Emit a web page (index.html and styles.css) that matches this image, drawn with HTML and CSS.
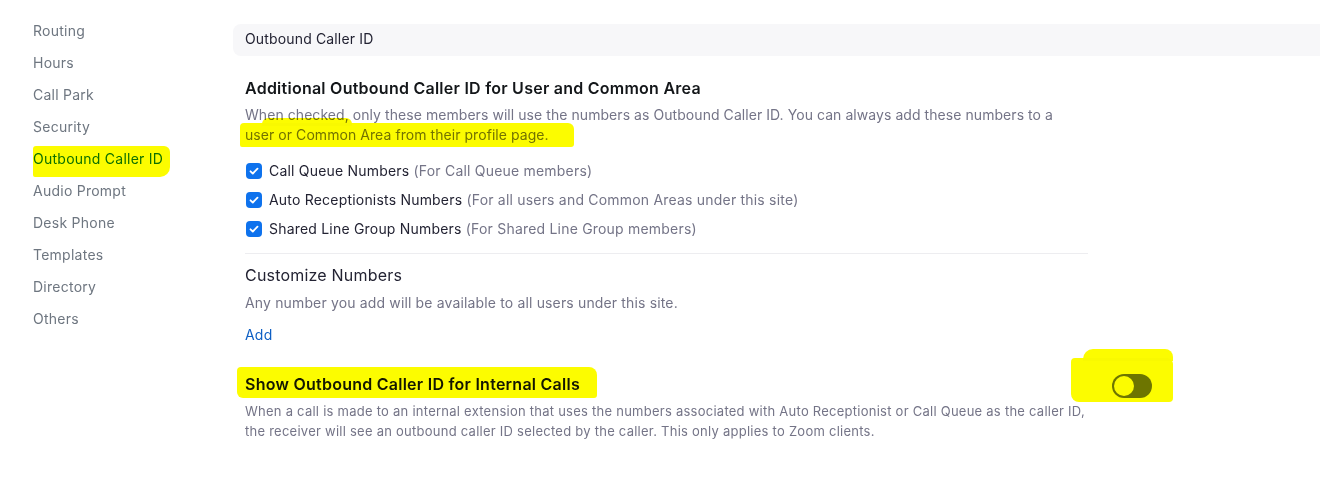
FILE: index.html
```html
<!DOCTYPE html>
<html>
<head>
<meta charset="utf-8">
<link rel="stylesheet" href="styles.css">
</head>
<body>
<div class="page">
  <nav class="sidebar">
    <div class="nav-item">Routing</div>
    <div class="nav-item">Hours</div>
    <div class="nav-item">Call Park</div>
    <div class="nav-item">Security</div>
    <div class="nav-item active">Outbound Caller ID</div>
    <div class="nav-item">Audio Prompt</div>
    <div class="nav-item">Desk Phone</div>
    <div class="nav-item">Templates</div>
    <div class="nav-item">Directory</div>
    <div class="nav-item">Others</div>
  </nav>
  <main class="main">
    <div class="section-bar">Outbound Caller ID</div>
    <div class="content">
      <h2 class="title">Additional Outbound Caller ID for User and Common Area</h2>
      <p class="desc">When checked, only these members will use the numbers as Outbound Caller ID. You can always add these numbers to a user or Common Area from their profile page.</p>
      <div class="checks">
        <label class="check"><span class="box"><svg viewBox="0 0 16 16" width="16" height="16"><path d="M4.5 8.3l2.3 2.2 4.7-4.8" fill="none" stroke="#fff" stroke-width="1.8" stroke-linecap="round" stroke-linejoin="round"/></svg></span><span>Call Queue Numbers <span class="hint">(For Call Queue members)</span></span></label>
        <label class="check"><span class="box"><svg viewBox="0 0 16 16" width="16" height="16"><path d="M4.5 8.3l2.3 2.2 4.7-4.8" fill="none" stroke="#fff" stroke-width="1.8" stroke-linecap="round" stroke-linejoin="round"/></svg></span><span>Auto Receptionists Numbers <span class="hint">(For all users and Common Areas under this site)</span></span></label>
        <label class="check"><span class="box"><svg viewBox="0 0 16 16" width="16" height="16"><path d="M4.5 8.3l2.3 2.2 4.7-4.8" fill="none" stroke="#fff" stroke-width="1.8" stroke-linecap="round" stroke-linejoin="round"/></svg></span><span>Shared Line Group Numbers <span class="hint">(For Shared Line Group members)</span></span></label>
      </div>
      <div class="divider"></div>
      <h3 class="subtitle">Customize Numbers</h3>
      <p class="desc sub-desc">Any number you add will be available to all users under this site.</p>
      <a class="link">Add</a>
      <div class="toggle-row">
        <h2 class="title">Show Outbound Caller ID for Internal Calls</h2>
        <span class="toggle"><span class="knob"></span></span>
      </div>
      <p class="desc note">When a call is made to an internal extension that uses the numbers associated with Auto Receptionist or Call Queue as the caller ID, the receiver will see an outbound caller ID selected by the caller. This only applies to Zoom clients.</p>
    </div>
  </main>
  <div class="mark mark-nav"></div>
  <div class="mark mark-desc"></div>
  <div class="mark mark-desc-bump"></div>
  <div class="mark mark-title"></div>
  <div class="mark mark-toggle"></div>
  <div class="mark mark-toggle-top"></div>
</div>
</body>
</html>
```

FILE: styles.css
```css
* { box-sizing: border-box; }
html, body { margin: 0; padding: 0; background: #fff; }
body {
  font-family: Inter, "Noto Sans", "Liberation Sans", sans-serif;
  color: #232333;
  width: 1320px;
  height: 478px;
  overflow: hidden;
}
.page {
  position: relative;
  display: flex;
  width: 1320px;
  height: 478px;
}
.sidebar {
  width: 233px;
  flex: none;
  padding: 15px 0 0 33px;
}
.nav-item {
  font-size: 14px;
  line-height: 32px;
  color: #6e7680;
  letter-spacing: 0.25px;
}
.nav-item.active { color: #0e72ed; }
.main {
  flex: 1;
  padding-top: 24px;
}
.section-bar {
  height: 32px;
  line-height: 30px;
  background: #f7f7f9;
  border-radius: 8px 0 0 8px;
  padding-left: 12px;
  font-size: 14px;
  color: #232333;
  letter-spacing: 0.15px;
}
.content {
  padding-left: 12px;
}
.title {
  margin: 20px 0 0;
  font-size: 16px;
  line-height: 24px;
  font-weight: 600;
  color: #131619;
  letter-spacing: 0.25px;
}
.desc {
  margin: 5px 0 0;
  width: 835px;
  font-size: 14px;
  line-height: 20px;
  color: #747487;
  letter-spacing: 0.06px;
}
.checks {
  margin-top: 11px;
}
.check {
  display: flex;
  align-items: center;
  gap: 7px;
  height: 29px;
  font-size: 14px;
  color: #232333;
  padding-left: 1px;
  letter-spacing: 0.2px;
}
.box {
  width: 16px;
  height: 16px;
  border-radius: 4px;
  background: #0e72ed;
  display: inline-flex;
}
.hint { color: #747487; }
.divider {
  margin-top: 10px;
  width: 843px;
  height: 1px;
  background: #ededf0;
}
.subtitle {
  margin: 9px 0 0;
  font-size: 16px;
  line-height: 24px;
  font-weight: 400;
  color: #232333;
  letter-spacing: 0.2px;
}
.sub-desc {
  margin-top: 6px;
  letter-spacing: 0.15px;
}
.link {
  display: block;
  margin-top: 12px;
  font-size: 14px;
  line-height: 20px;
  color: #0e5fc4;
  letter-spacing: 0.2px;
}
.toggle-row {
  margin-top: 27px;
  width: 907px;
  display: flex;
  justify-content: space-between;
  align-items: center;
}
.toggle-row .title { margin: 0; }
.toggle {
  width: 40px;
  height: 24px;
  border-radius: 12px;
  background: #6e7680;
  display: inline-flex;
  align-items: center;
  padding: 2px;
  margin-bottom: -3px;
}
.knob {
  width: 20px;
  height: 20px;
  border-radius: 50%;
  background: #fff;
}
.note {
  margin-top: 5px;
  font-size: 13px;
  width: 850px;
  letter-spacing: 0.25px;
}
.mark {
  position: absolute;
  background: #fcfc00;
  mix-blend-mode: multiply;
}
.mark-nav { left: 33px; top: 146px; width: 137px; height: 31px; border-radius: 3px 6px 10px 2px; }
.mark-desc { left: 240px; top: 123px; width: 334px; height: 24px; border-radius: 4px 6px 3px 2px; }
.mark-desc-bump { left: 262px; top: 118px; width: 90px; height: 8px; border-radius: 6px 6px 0 0; }
.mark-title { left: 237px; top: 367px; width: 360px; height: 31px; border-radius: 4px 8px 3px 6px; }
.mark-toggle { left: 1071px; top: 358px; width: 102px; height: 44px; border-radius: 4px 6px 4px 8px; }
.mark-toggle-top { left: 1083px; top: 349px; width: 90px; height: 12px; border-radius: 10px 8px 0 0; }
```
